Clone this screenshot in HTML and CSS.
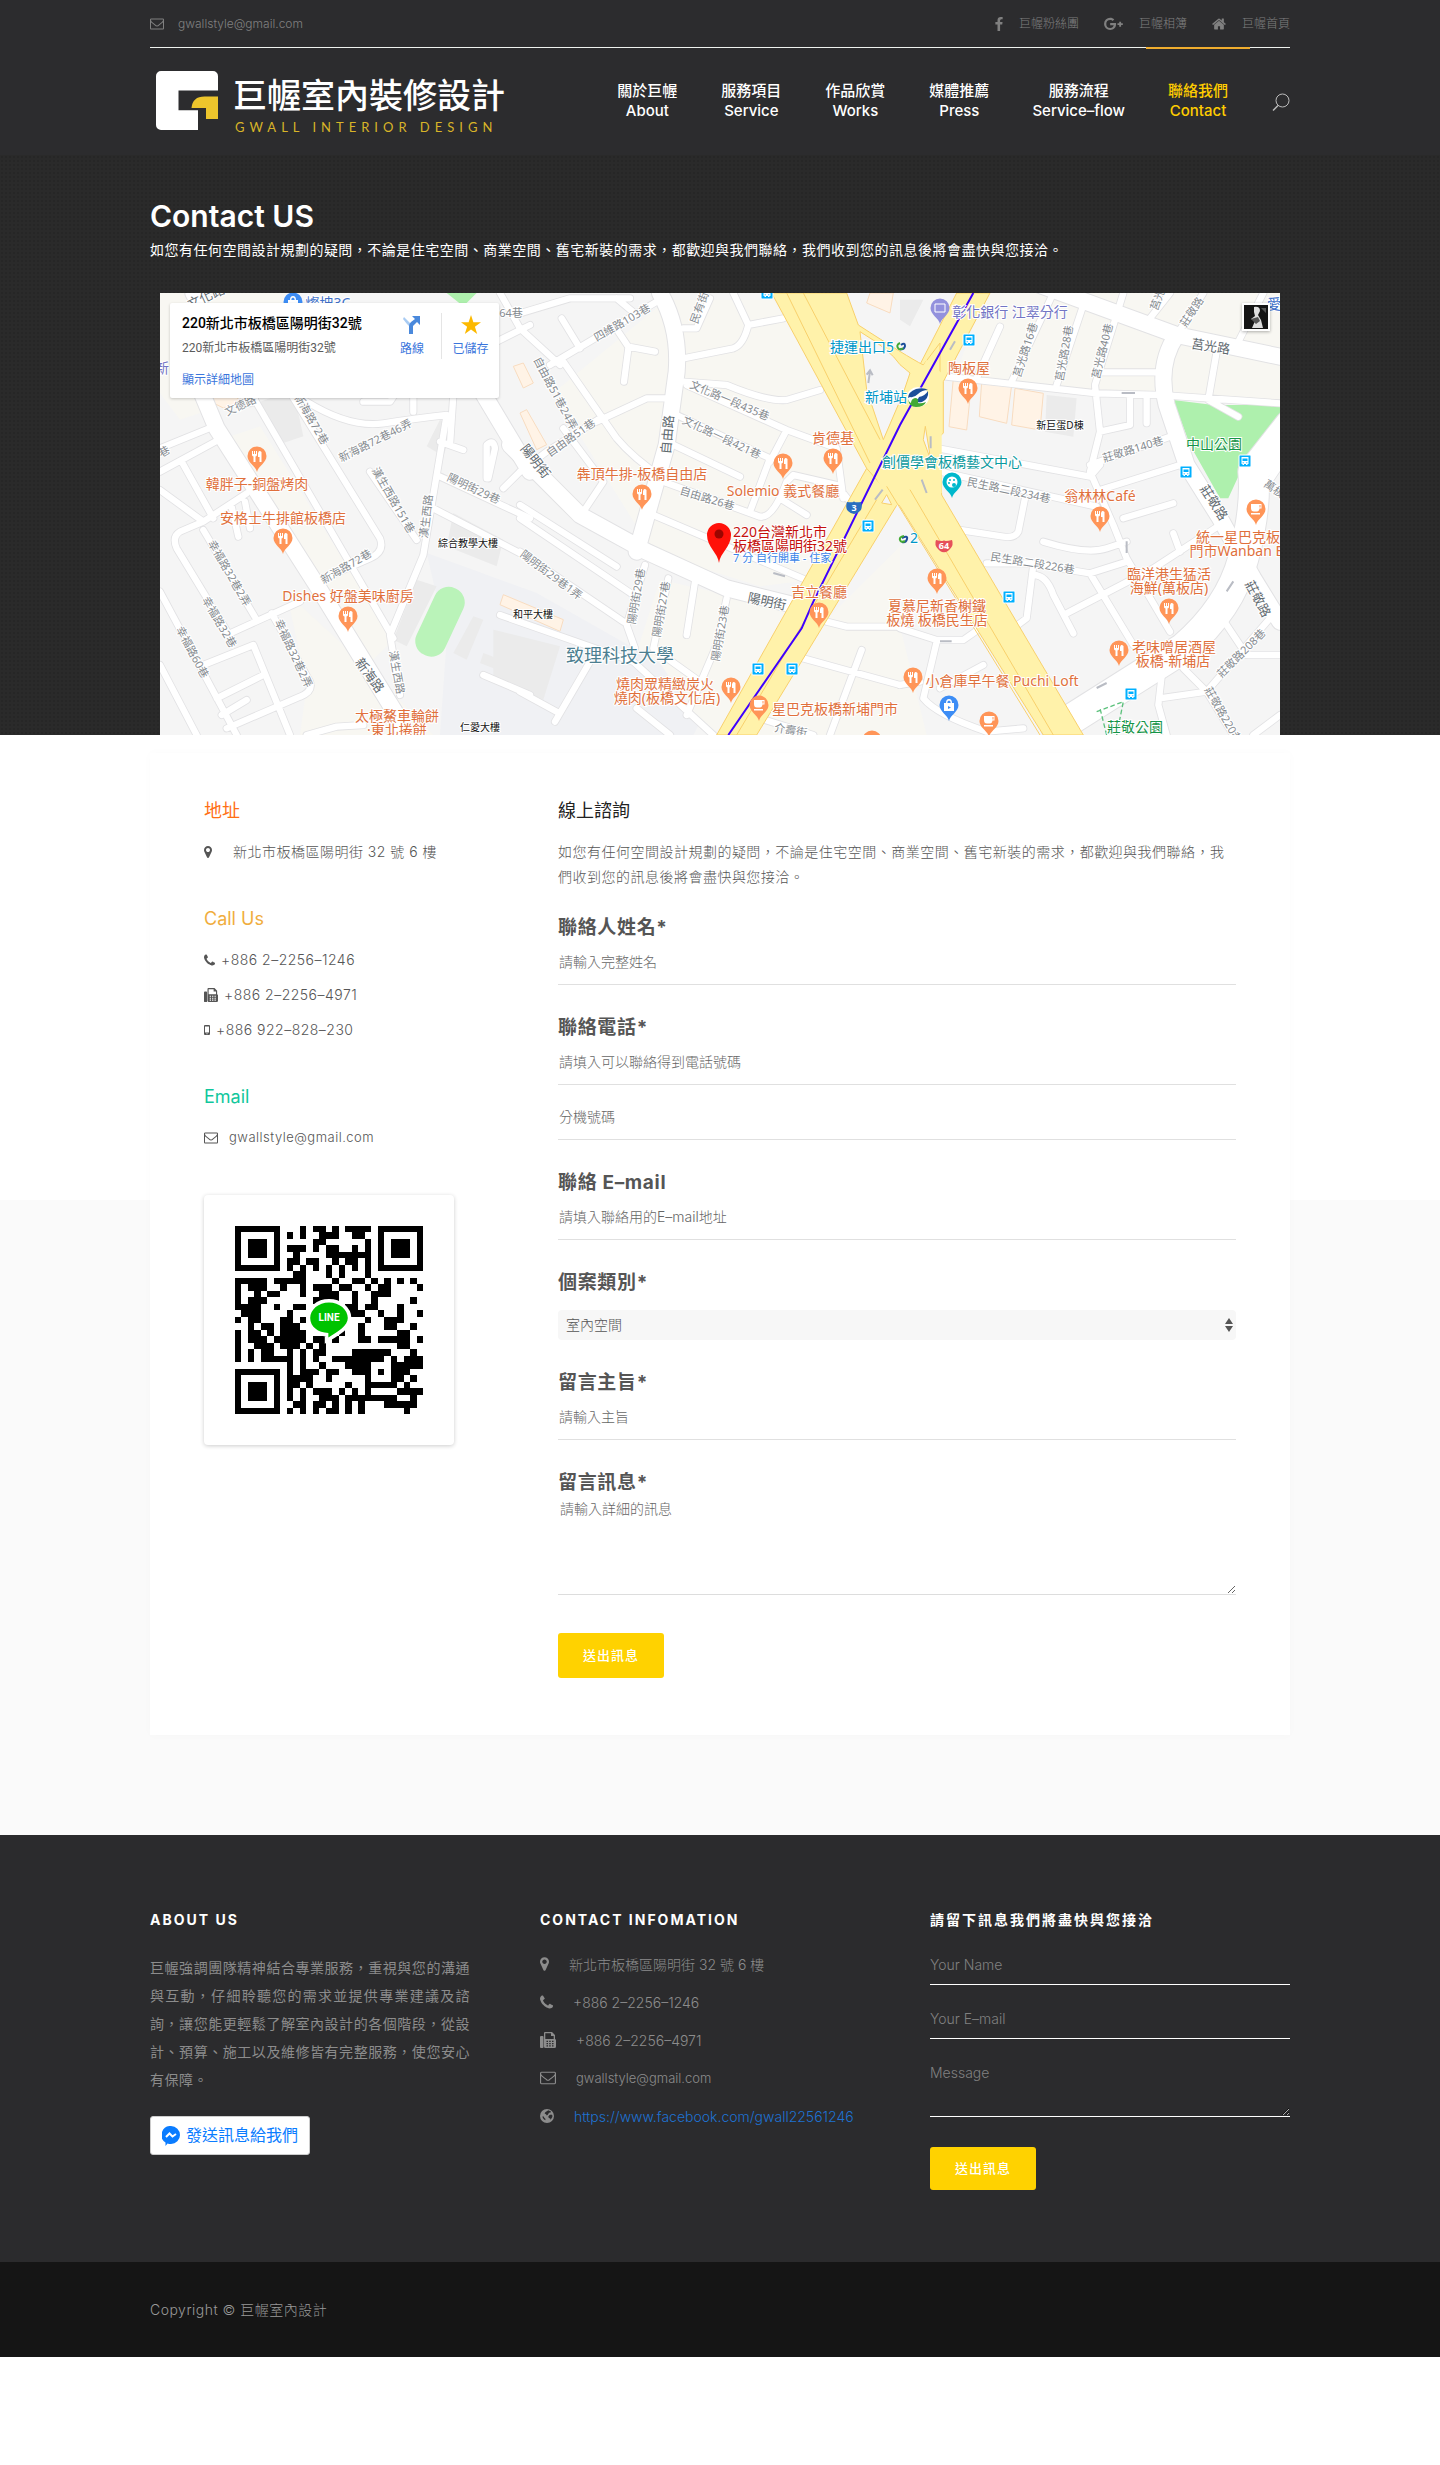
FILE: index.html
```html
<!DOCTYPE html>
<html lang="zh-Hant-TW">
<head>
<meta charset="utf-8">
<meta name="viewport" content="width=device-width, initial-scale=1">
<title>Contact US - 巨幄室內裝修設計</title>
<link rel="stylesheet" href="styles.css">
</head>
<body>
<svg class="defs" aria-hidden="true">
  <symbol id="i-mail" viewBox="0 256 1792 1408"><path d="M1664 1504v-768q-32 36-69 66-268 206-426 338-51 43-83 67t-86.500 48.500-102.500 24.500h-2q-48 0-102.500-24.500t-86.500-48.500-83-67q-158-132-426-338-37-30-69-66v768q0 13 9.500 22.500t22.500 9.500h1472q13 0 22.500-9.500t9.500-22.500zm0-1051v-24.500t-.5-13-3-12.500-5.500-9-9-7.500-14-2.500h-1472q-13 0-22.500 9.500t-9.500 22.500q0 168 147 284 193 152 401 317 6 5 35 29.500t46 37.500 44.500 31.500 50.500 27.500 43 9h2q20 0 43-9t50.500-27.500 44.500-31.500 46-37.500 35-29.500q208-165 401-317 54-43 100.500-115.500t46.500-131.500zm128-37v1088q0 66-47 113t-113 47h-1472q-66 0-113-47t-47-113v-1088q0-66 47-113t113-47h1472q66 0 113 47t47 113z"/></symbol>
  <symbol id="i-marker" viewBox="384 128 1024 1536"><path d="M1152 640q0-106-75-181t-181-75-181 75-75 181 75 181 181 75 181-75 75-181zm256 0q0 109-33 179l-364 774q-16 33-47.500 52t-67.500 19-67.500-19-46.500-52l-365-774q-33-70-33-179 0-212 150-362t362-150 362 150 150 362z"/></symbol>
  <symbol id="i-phone" viewBox="192 128 1408 1408"><path d="M1600 1240q0 27-10 70.500t-21 68.500q-21 50-122 106-94 51-186 51-27 0-53-3.500t-57.500-12.500-47-14.500-55.500-20.500-49-18q-98-35-175-83-127-79-264-216t-216-264q-48-77-83-175-3-9-18-49t-20.500-55.500-14.500-47-12.500-57.500-3.500-53q0-92 51-186 56-101 106-122 25-11 68.500-21t70.500-10q14 0 21 3 18 6 53 76 11 19 30 54t35 63.500 31 53.500q3 4 17.500 25t21.500 35.500 7 28.500q0 20-28.500 50t-62 55-62 53-28.500 46q0 9 5 22.500t8.500 20.500 14 24 11.500 19q76 137 174 235t235 174q2 1 19 11.500t24 14 20.500 8.500 22.500 5q18 0 46-28.500t53-62 55-62 50-28.500q14 0 28.500 7t35.500 21.500 25 17.500q25 15 53.500 31t63.500 35 54 30q70 35 76 53 3 7 3 21z"/></symbol>
  <symbol id="i-fax" viewBox="0 0 16 16"><path fill-rule="evenodd" d="M1 4h1.500a1 1 0 0 1 1 1v10a1 1 0 0 1-1 1H1a1 1 0 0 1-1-1V5a1 1 0 0 1 1-1zM5 0h7l3 3v4a1.500 1.500 0 0 1 1 1.500V14.500A1.500 1.500 0 0 1 14.500 16H5.500A1.500 1.500 0 0 1 4 14.500V1a1 1 0 0 1 1-1zM5.300 1.300V7h8.400V4H11V1.300zM6.500 8.800v1.300H8V8.800zM9.200 8.800v1.300h1.500V8.800zM12 8.800v1.300h1.500V8.800zM6.500 11v1.300H8V11zM9.200 11v1.300h1.500V11zM12 11v1.300h1.500V11zM6.500 13.200v1.300H8v-1.300zM9.200 13.200v1.300h1.500v-1.300zM12 13.200v1.300h1.500v-1.300z"/></symbol>
  <symbol id="i-mobile" viewBox="0 0 6 10"><path fill-rule="evenodd" d="M1 0h4a1 1 0 0 1 1 1v8a1 1 0 0 1-1 1H1a1 1 0 0 1-1-1V1a1 1 0 0 1 1-1zM1 1.600v6h4v-6zM2.500 8.300v.9h1v-.9z"/></symbol>
  <symbol id="i-globe" viewBox="0 0 14 14"><path fill-rule="evenodd" d="M7 0a7 7 0 1 1 0 14A7 7 0 0 1 7 0zM8.300 1.300 6.800 2.200 5.300 3.200 4.600 4.600 6 5.300l.8 1.200 1-.8 1.200-1.900 1.600-.3.400-1zM11.300 5.500 9.500 6 8.300 7.600l.5 1.400 1.400.4.3 1.300 1.600-2.200.5-1.800zM2.500 7.200l.3 1.800 1.300 1.600 1.200.6.200-1.300-1.200-1.200-.6-1.200z"/></symbol>
  <symbol id="i-fb" viewBox="479 0 864 1664"><path d="M1343 12v264h-157q-86 0-116 36t-30 108v189h293l-39 296h-254v759h-306v-759h-255v-296h255v-218q0-186 104-288.500t277-102.500q147 0 228 12z"/></symbol>
  <symbol id="i-gplus" viewBox="0 0 20 13"><path d="M6.500 5.400h6.100q.1.600.1 1.200c0 3.700-2.500 6.300-6.200 6.300a6.450 6.450 0 0 1 0-12.900c1.700 0 3.200.6 4.300 1.700L9 3.400c-.5-.5-1.300-1-2.500-1a4.100 4.100 0 0 0 0 8.200c2.600 0 3.600-1.900 3.700-2.900H6.500zM16 4h2v1.700h1.800v1.900H18v1.800h-2V7.600h-1.800V5.700H16z"/></symbol>
  <symbol id="i-home" viewBox="64 224 1664 1344"><path d="M1472 992v480q0 26-19 45t-45 19h-384v-384h-256v384h-384q-26 0-45-19t-19-45v-480q0-1 .5-3t.5-3l575-474 575 474q1 2 1 6zm223-69l-62 74q-8 9-21 11h-3q-13 0-21-7l-692-577-692 577q-12 8-24 7-13-2-21-11l-62-74q-8-10-7-23.500t11-21.500l719-599q32-26 76-26t76 26l244 204v-195q0-14 9-23t23-9h192q14 0 23 9t9 23v408l219 182q10 8 11 21.500t-7 23.500z"/></symbol>
  <g id="pin"><path d="M0 16C-1 10-9.500 7-9.500 0a9.500 9.500 0 0 1 19 0C9.500 7 1 10 0 16z"/></g>
  <g id="food"><use href="#pin"/><path fill="#fff" d="M-5-5h1v3h1v-3h1v3h1v-3h1v4q0 1-1.500 1.500V6h-2V.5Q-5 0-5-1zM2-5q2 0 2.500 1V6h-2V1H1V-3z"/></g>
  <g id="cup"><use href="#pin"/><path fill="#fff" fill-rule="evenodd" d="M-5-5H5.500v4.500H3.500Q3 2.500 1 2.500H-2Q-5 2.500-5-1zM3.500-4v2.500h1V-4zM-5 4H4v1.500h-9z"/></g>
  <g id="bag"><use href="#pin"/><path fill="#fff" fill-rule="evenodd" d="M-5-2h2q0-4 3-4t3 4h2v8H-5zM-1.700-2h3.400q0-2.500-1.700-2.500T-1.700-2zM-1 1v3l3-1.500z"/></g>
  <g id="bus"><rect x="-6" y="-6" width="12" height="12" rx="1" fill="#00b0ff" stroke="#fff"/><path fill="#fff" fill-rule="evenodd" d="M-3.500-4h7v7h-1v1h-1.500V3h-2v1h-1.500V3h-1zM-2.500-2.500v2.500h5v-2.500zM-2.300 1.200v1h1v-1zM1.300 1.200v1h1v-1z"/></g>
</svg>

<header class="site-header">
  <div class="container">
    <div class="topbar">
      <a class="topbar-link mail" href="mailto:gwallstyle@gmail.com"><svg class="ic w14"><use href="#i-mail"/></svg>gwallstyle@gmail.com</a>
      <nav class="social" aria-label="社群">
        <a class="topbar-link" href="#"><svg class="ic w8"><use href="#i-fb"/></svg>巨幄粉絲團</a>
        <a class="topbar-link" href="#"><svg class="ic w19"><use href="#i-gplus"/></svg>巨幄相簿</a>
        <a class="topbar-link" href="#"><svg class="ic w14"><use href="#i-home"/></svg>巨幄首頁</a>
      </nav>
    </div>
    <div class="mainbar">
      <a class="logo" href="#">
        <svg class="logo-mark" viewBox="0 0 62 59" aria-hidden="true"><path fill="#fff" d="M5 0h52a5 5 0 0 1 5 5v14.500H22.500v19.700H42V59H5a5 5 0 0 1-5-5V5a5 5 0 0 1 5-5z"/><path fill="#edc52c" d="M62 25.500V48H50V37H35.500q1-11.500 13-11.500z"/></svg>
        <span class="logo-text"><span class="logo-zh">巨幄室內裝修設計</span><span class="logo-en">GWALL INTERIOR DESIGN</span></span>
      </a>
      <nav class="menu" aria-label="主選單">
        <a href="#">關於巨幄<br>About</a>
        <a href="#">服務項目<br>Service</a>
        <a href="#">作品欣賞<br>Works</a>
        <a href="#">媒體推薦<br>Press</a>
        <a href="#">服務流程<br>Service–flow</a>
        <a class="active" href="#">聯絡我們<br>Contact</a>
        <button class="search" type="button" aria-label="搜尋"><svg viewBox="0 0 18 18"><g fill="none" stroke="#bbb"><circle cx="10.500" cy="7.500" r="6.500"/><path d="M6 12.500 1 17.500" stroke-width="1.500"/></g></svg></button>
      </nav>
    </div>
  </div>
</header>

<section class="hero">
  <div class="container">
    <h1>Contact US</h1>
    <p>如您有任何空間設計規劃的疑問，不論是住宅空間、商業空間、舊宅新裝的需求，都歡迎與我們聯絡，我們收到您的訊息後將會盡快與您接洽。</p>
    <div class="map">
      <svg class="map-art" viewBox="0 0 1120 442" preserveAspectRatio="xMidYMid slice" role="img" aria-label="地圖">
        <rect width="1120" height="442" fill="#f5f5f5"/>
        <g transform="scale(.33333)">
          <g fill="#f8f7f2">
            <path d="M0 0H420L300 300 60 380 0 300zM180 440 300 400 700 1040 620 1120z"/>
            <path d="M380 900 620 1120 820 1326H420L440 1180z"/>
            <path d="M1180 300 1520 20H1840L2140 540 1960 860 1800 880 1480 780z"/>
            <path d="M1500 860 1940 960 1700 1326 1560 1280 1420 1110z"/>
            <path d="M2000 980 2220 760V1000L2300 1326H1790zM2480 0H3360V330L2800 300 2380 260z"/>
          </g>
          <path fill="#f0f1f4" d="M800 780 1130 900 1500 1110 1620 1290 1600 1326H840L860 1040z"/>
          <g fill="#ebebeb">
            <path d="M290 330 400 290 430 430 370 450zM880 660 1030 740 1010 820 860 760zM840 380 880 400 850 490 800 460zM770 860 830 880 740 1060 700 1040zM940 970 970 980 920 1100 880 1080zM970 1080 1150 1150 1140 1180 960 1110zM1000 1010 1200 1060 1150 1220 1000 1150z"/>
            <path d="M2220 20H2290L2250 100 2220 80zM2660 306 2750 316 2740 431 2655 416z"/>
          </g>
          <g fill="#fff3e6" stroke="#f8dcc0" stroke-width="3">
            <path d="M1060 220 1090 210 1120 270 1090 285zM1080 360 1100 350 1160 455 1130 470zM1030 905 1210 980 1200 1015 1020 935zM2130 0 2200 0 2190 60 2120 30zM140 320 200 290 250 330 190 345z"/>
            <path d="M2465 266 2555 276 2540 391 2458 371zM2565 286 2650 301 2640 411 2555 396zM2380 256 2435 266 2420 411 2367 401z"/>
          </g>
          <path fill="#aef0ad" d="M3040 321 3160 336H3360V396L3260 496 3205 616H3180L3090 456zM860 0 950 0 910 40z"/>
          <rect fill="#baf3b9" x="793" y="876" width="94" height="220" rx="45" transform="rotate(25 840 986)"/>
          <defs>
            <g id="lanes">
              <path transform="translate(-30 -24)" d="M30 490 190 425M30 560 205 465M95 530 190 700M30 615 160 710 290 625M160 710 90 740Q65 755 80 790L250 1070M160 735 320 1005M240 1045 450 950M365 985 480 1190Q490 1220 450 1235L230 1330M30 920 260 1350M160 1140 310 1080 420 1350M200 1240 340 1170M30 1140 140 1350M215 1290 290 1245M245 665 265 755M285 650 300 730M300 320 730 1060M400 290 690 760Q705 800 660 820L500 890M470 350Q600 430 700 415T890 390M910 330 900 480M890 390 820 810 720 1050 750 1230M660 560 800 765M870 470 940 495M860 570 1140 700M850 670 1140 820M1010 580V480Q1030 460 1035 490L1015 580M1060 610 1110 560M640 350H720L740 320M790 380V320M470 1350 560 1325 640 1320M1000 1170 1140 1230M1040 170 1140 120M1050 24 1110 130"/>
              <path transform="translate(1080 -24)" d="M0 85 150 40H330M0 130 120 240M90 240 410 50M125 100 180 190M290 40 350 90M295 140 325 185 405 200M325 190 312 290M130 230 290 460Q340 520 430 580M230 410 380 340H440M240 400 80 500 0 560M130 430 250 590 190 680M640 24 685 120 790 100M685 120Q670 180 640 190L490 220M490 130H530L570 40M490 290 620 300Q740 350 800 345L900 315M500 300 800 435 950 490 970 640M470 390 750 520 690 680M800 435 750 530M440 470 660 575M430 590 720 695Q760 700 800 590L820 570 950 600 990 650M780 640 860 690M400 690 870 890M0 660 290 845M0 700 340 930M0 800 310 1010M375 840 320 1020 345 1090M445 880 400 1090 540 1190M525 890 500 1050M620 940 590 1080 500 1290M920 1010 980 1025H1140M850 1120 1140 1200M1025 1095 930 1350M-60 990 340 1130 580 1350M210 1130 105 1310M0 1220 110 1280M350 1270 450 1350M720 1300 880 1350"/>
              <path transform="translate(2220 -24)" d="M140 275 590 325 780 330 1140 355M300 125 230 280M460 24 335 290M550 60 470 300M670 24 585 300 600 440 570 560 640 720 680 820 810 1040M600 262H770M690 330V420L600 440M740 330V415M950 200 925 345 1015 395M115 490 570 575 600 540M600 615 840 540M570 540 810 455M120 560 590 665M375 640 355 740Q345 760 310 755L180 735M670 700 820 655M430 770Q560 810 620 790L680 770M260 835H390L570 865 680 830M570 865 700 1080M500 985 760 850 960 720M820 745 840 800M400 840 380 1000 340 1030M400 870Q440 870 460 930L520 1045M0 1030 110 1065H190L240 1030M110 1070 70 1240Q110 1290 260 1340L370 1330M120 1210 250 1140M960 990 1040 1110H1140M1110 1000 920 1220 780 1240M850 1150 920 1220 1000 1350M790 1130 775 1260 800 1350M1010 180 1090 24M750 100 810 24M830 150 910 24M1100 600 1140 540M0 1200 60 1190M1060 1350 1140 1290"/>
            </g>
            <g id="streets">
              <path transform="translate(-30 -24)" d="M120 240 200 430 500 900 740 1290 770 1370M130 24 300 340M960 260 1140 560"/>
              <path transform="translate(1080 -24)" d="M-30 480 180 690 380 800 620 910 860 970M420 24Q480 130 470 260L440 480 350 800"/>
              <path transform="translate(2220 -24)" d="M420 0 830 150 1140 215M830 150Q770 240 800 360L860 540 960 700 1060 880 1140 1010"/>
            </g>
            <path id="avenue" transform="translate(2220 -24)" d="M470 1330 850 1090Q990 970 1030 820T1060 560L1170 420"/>
          </defs>
          <g fill="none" stroke-linejoin="round" stroke-linecap="round">
            <use href="#lanes" stroke="#e2e2e4" stroke-width="24"/>
            <use href="#streets" stroke="#e2e2e4" stroke-width="54"/>
            <use href="#avenue" stroke="#e2e2e4" stroke-width="96"/>
            <use href="#lanes" stroke="#fff" stroke-width="19"/>
            <use href="#streets" stroke="#fff" stroke-width="48"/>
            <use href="#avenue" stroke="#fff" stroke-width="90"/>
          </g>
          <g fill="#fff2aa" stroke="#f8d06b" stroke-width="3">
            <path d="M1670 1326 2120 526 2390 0H2490L2350 266V420L2330 440 1790 1326z"/>
            <path d="M1835 0H2060L2095 96Q2240 190 2290 216L2340 150V440L2345 606 2770 1326H2650L2220 640 2120 526z"/>
          </g>
          <path fill="#fff2aa" d="M2125 520 2300 200 2345 240V600L2200 640z"/>
          <path d="M2100 116Q2190 170 2220 215L2250 240 2230 300 2170 440 2120 290zM2165 630 2180 605 2195 635zM2290 440 2296 400 2312 500z" fill="#f5f5f5" stroke="#f8d06b" stroke-width="3"/>
          <path d="M1930 0 2160 440M1880 0 2130 510M2180 580 2640 1326M2250 590 2680 1326M1730 1326 2150 620" fill="none" stroke="#f8d06b" stroke-width="3"/>
          <path d="M1705 1326 1925 1006 1960 926 2220 396 2440 0" fill="none" stroke="#3f00ff" stroke-width="6"/>
          <path d="M2125 270 2130 235M2120 245 2130 232 2138 247M1840 840 1875 850M2145 620 2168 590M2370 170 2385 145M2312 466V430M2885 300H2925M2900 745V780M3200 895 3220 865M2840 1170 2810 1185M2300 600 2285 560M2340 1045H2375" stroke="#b9bcc4" stroke-width="6" fill="none"/>
          <path d="M2810 1256 2890 1226 2870 1326M2840 1326 2820 1246" fill="none" stroke="#5cc17c" stroke-width="4" stroke-dasharray="14 8"/>
        </g>

        <g class="st">
          <text transform="translate(217 151) rotate(-27)">新海路72巷46弄</text><text transform="translate(148 128) rotate(60)">新海路72巷</text><text transform="translate(82 116) rotate(-25)">文德路</text><text transform="translate(230 209) rotate(60)">漢生西路151巷</text><text transform="translate(270 224) rotate(-83)">漢生西路</text><text transform="translate(312 199) rotate(25)">陽明街29巷</text><text transform="translate(188 277) rotate(-30)">新海路72巷</text><text transform="translate(66 282) rotate(60)">幸福路32巷2弄</text><text transform="translate(56 331) rotate(60)">幸福路32巷</text><text transform="translate(29 361) rotate(62)">幸福路60巷</text><text transform="translate(130 362) rotate(65)">幸福路32巷2弄</text><text transform="translate(233 380) rotate(80)">漢生西路</text><text x="351" y="24">64巷</text><text transform="translate(6 162) rotate(-30)">巷</text><text transform="translate(366 268) rotate(40)">陽</text>
          <text transform="translate(464 33) rotate(-30)">四維路103巷</text><text transform="translate(543 16) rotate(-70)">民有街</text><text transform="translate(392 102) rotate(62)">自由路51巷24弄</text><text transform="translate(413 148) rotate(-35)">自由路51巷</text><text transform="translate(568 111) rotate(23)">文化路一段435巷</text><text transform="translate(560 148) rotate(25)">文化路一段421巷</text><text transform="translate(546 209) rotate(17)">自由路26巷</text><text transform="translate(389 285) rotate(37)">陽明街29巷1弄</text><text transform="translate(480 304) rotate(-80)">陽明街29巷</text><text transform="translate(505 317) rotate(-80)">陽明街27巷</text><text transform="translate(564 341) rotate(-80)">陽明街23巷</text><text transform="translate(630 441) rotate(10)">介壽街</text>
          <text transform="translate(869 58) rotate(-72)">莒光路16巷</text><text transform="translate(908 61) rotate(-80)">莒光路28巷</text><text transform="translate(946 59) rotate(-76)">莒光路40巷</text><text transform="translate(1035 21) rotate(-57)">莊敬路</text><text transform="translate(1001 8) rotate(-70)">莒光</text><text transform="translate(974 160) rotate(-17)">莊敬路140巷</text><text transform="translate(848 201) rotate(12)">民生路二段234巷</text><text transform="translate(872 274) rotate(9)">民生路二段226巷</text><text transform="translate(1112 199) rotate(35)">萬板</text><text transform="translate(1084 363) rotate(-45)">莊敬路208巷</text><text transform="translate(1060 424) rotate(60)">莊敬路220巷</text>
        </g>
        <g class="st main">
          <text transform="translate(48 8) rotate(-25)">文化路</text><text transform="translate(206 385) rotate(54)">新海路</text><text transform="translate(512 142) rotate(-85)">自由路</text><text transform="translate(372 171) rotate(52)">陽明街</text><text transform="translate(606 313) rotate(12)">陽明街</text><text transform="translate(1050 58) rotate(9)">莒光路</text><text transform="translate(1050 212) rotate(57)">莊敬路</text><text transform="translate(1094 308) rotate(62)">莊敬路</text>
        </g>
        <g class="poi">
          <text x="97" y="196">韓胖子-銅盤烤肉</text><text x="123" y="230">安格士牛排館板橋店</text><text x="188" y="308">Dishes 好盤美味廚房</text><text x="237" y="428">太極鰲車輪餅</text><text x="237" y="442">·東北捲餅</text><text x="482" y="186">犇頂牛排-板橋自由店</text><text x="623" y="203">Solemio 義式餐廳</text><text x="673" y="150">肯德基</text><text x="659" y="304">吉立餐廳</text><text x="505" y="396">燒肉眾精緻炭火</text><text x="507" y="410">燒肉(板橋文化店)</text><text x="675" y="421">星巴克板橋新埔門市</text><text x="777" y="318">夏慕尼新香榭鐵</text><text x="777" y="332">板燒 板橋民生店</text><text x="809" y="80">陶板屋</text><text x="940" y="208">翁林林Café</text><text x="1085" y="249">統一星巴克板橋</text><text x="1081" y="263">門市Wanban B1</text><text x="1009" y="286">臨洋港生猛活</text><text x="1009" y="300">海鮮(萬板店)</text><text x="1014" y="359">老味噌居酒屋</text><text x="1013" y="373">板橋-新埔店</text><text x="842" y="393">小倉庫早午餐 Puchi Loft</text>
          <g class="c-red"><text x="573" y="244">220台灣新北市</text><text x="573" y="258">板橋區陽明街32號</text></g>
          <text class="c-route" x="573" y="269">7 分 自行開車 - 住家</text>
          <g class="c-metro"><text x="702" y="59">捷運出口5</text><text x="726" y="109">新埔站</text><text x="754" y="250">2</text></g>
          <text class="c-teal" x="792" y="174">創價學會板橋藝文中心</text>
          <g class="c-bank"><text x="850" y="24">彰化銀行 江翠分行</text><text x="2" y="80">新</text></g>
          <g class="c-green"><text x="1054" y="156">中山公園</text><text x="975" y="439">莊敬公園</text></g>
          <g class="c-shop"><text x="168" y="15">燦坤3C</text><text x="1114" y="16">愛</text></g>
          <text class="c-school" x="460" y="369">致理科技大學</text>
          <g class="c-bld"><text x="308" y="254">綜合教學大樓</text><text x="373" y="325">和平大樓</text><text x="320" y="438">仁愛大樓</text><text x="900" y="136">新巨蛋D棟</text></g>
        </g>
        <g fill="#ff9558">
          <use href="#food" transform="translate(97 163)"/><use href="#food" transform="translate(123 245)"/><use href="#food" transform="translate(188 323)"/><use href="#food" transform="translate(482 201)"/><use href="#food" transform="translate(623 170)"/><use href="#food" transform="translate(673 165)"/><use href="#food" transform="translate(659 319)"/><use href="#food" transform="translate(571 394)"/><use href="#food" transform="translate(808 95)"/><use href="#food" transform="translate(940 223)"/><use href="#food" transform="translate(1009 315)"/><use href="#food" transform="translate(959 357)"/><use href="#food" transform="translate(777 285)"/><use href="#food" transform="translate(753 384)"/>
          <use href="#cup" transform="translate(599 412)"/><use href="#cup" transform="translate(712 447)"/><use href="#cup" transform="translate(1096 216)"/><use href="#cup" transform="translate(829 428)"/>
        </g>
        <g fill="#3d8df5"><use href="#bag" transform="translate(789 412)"/><use href="#bag" transform="translate(133 9)"/></g>
        <g fill="#9391dd" transform="translate(780 15)"><use href="#pin"/><path d="M-5-4H5V4H-5z" fill="none" stroke="#fff"/></g>
        <g fill="#00b8cc" transform="translate(792 189)"><use href="#pin"/><circle r="5.500" fill="#fff"/><circle cx="-2" cy="-2" r="1"/><circle cx="2" cy="-2" r="1"/><circle cx="-3" cy="1" r="1"/><circle cx="2" cy="3" r="2"/></g>
        <use href="#bus" transform="translate(607 0)"/><use href="#bus" transform="translate(598 376)"/><use href="#bus" transform="translate(632 376)"/><use href="#bus" transform="translate(708 233)"/><use href="#bus" transform="translate(809 47)"/><use href="#bus" transform="translate(1026 179)"/><use href="#bus" transform="translate(1085 168)"/><use href="#bus" transform="translate(849 304)"/><use href="#bus" transform="translate(971 401)"/>
        <g><ellipse cx="758" cy="104" rx="11" ry="10" fill="#fff"/><path d="M748 105q0-6 8-9 8-2 12 1-6 0-10 4t-8 3zM759 104q6-1 9-6 1 8-6 11-5 1-9-1 5-1 6-4z" fill="#1c4e9a"/><path d="M748 106q1 8 8 8 8 0 10-5-5 2-8 1 1-5-3-5-4 1-4 5-2-1-3-4z" fill="#43a935"/></g>
        <g fill="none" stroke-width="2"><path stroke="#1c4e9a" d="M741 52q4-3 4 1-1 4-5 3M742 245q6-3 5 1-1 4-5 3"/><path stroke="#43a935" d="M740 50q-4 2-2 5t5 0M744 243q-5 1-4 4t5 1"/></g>
        <path d="M687 209q7 1 7-1 0 2 7 1 2 6-1 9t-6 3q-3 0-6-3t-1-9z" fill="#2a6fc0"/><text class="shield" x="694" y="218">3</text>
        <path d="M776 247q8 2 8 0 0 2 8 0 2 5-2 9t-6 3q-2 1-6-3t-2-9z" fill="#e6505a"/><text class="shield" x="784" y="256">64</text>
        <path d="M559 270c-1-10-12-16-12-28a12 12 0 0 1 24 0c0 12-11 18-12 28z" fill="#ff1109"/><circle cx="559" cy="241" r="4.500" fill="#9c0500"/>
      </svg>
      <div class="place">
        <div class="place-text">
          <strong>220新北市板橋區陽明街32號</strong>
          <span>220新北市板橋區陽明街32號</span>
          <a href="#">顯示詳細地圖</a>
        </div>
        <a class="place-act" href="#"><svg viewBox="0 0 20 20"><path fill="#a9ccf3" d="M2 2 9 9v4L5 9 1 4z"/><path fill="#4a89dc" d="M18 1v9l-3-3-4 4v8H7v-8q0-2 2-4l4-3-3-3z"/></svg>路線</a>
        <a class="place-act" href="#"><svg viewBox="0 0 20 20"><path fill="#fcb900" d="m10 0 2.400 7.200H20l-6.100 4.500L16.200 19 10 14.500 3.800 19l2.300-7.300L0 7.200h7.600z"/></svg>已儲存</a>
      </div>
      <svg class="avatar" viewBox="0 0 24 24" role="img" aria-label="使用者"><path fill="#151515" d="M0 0h24v24H0z"/><path fill="#ddd" d="M10 2q6-1 6 4l-2 4 3 5 2 8H8l3-7-4-2 4-3-1-4z"/><path fill="#555" d="m7 14 7-2 2 4-4 3zM17 3h5v5z"/></svg>
    </div>
  </div>
</section>

<main class="content">
  <div class="container card">
    <aside class="info">
      <section>
        <h2 class="t-orange">地址</h2>
        <p class="wide"><svg class="ic w8"><use href="#i-marker"/></svg>新北市板橋區陽明街 32 號 6 樓</p>
      </section>
      <section>
        <h2 class="t-amber">Call Us</h2>
        <p><svg class="ic w11"><use href="#i-phone"/></svg>+886 2–2256–1246</p>
        <p><svg class="ic w14"><use href="#i-fax"/></svg>+886 2–2256–4971</p>
        <p><svg class="ic w6"><use href="#i-mobile"/></svg>+886 922–828–230</p>
      </section>
      <section>
        <h2 class="t-teal">Email</h2>
        <p class="mid"><svg class="ic w14"><use href="#i-mail"/></svg><span class="email">gwallstyle@gmail.com</span></p>
      </section>
      <div class="qr">
        <svg viewBox="0 0 29 29" role="img" aria-label="LINE QR Code">
          <g fill="none" stroke="#000" shape-rendering="crispEdges">
            <path d="M.5.500h6v6h-6zM22.500.500h6v6h-6zM.5 22.500h6v6h-6z"/>
            <path stroke-width="3" d="M2 3.500h3M24 3.500h3M2 25.500h3"/>
            <path d="M10 .5h1M12 .5h2M15 .5h1M17 .5h4M8 1.500h1M10 1.500h1M13 1.500h3M18 1.500h2M12 2.500h2M20 2.500h1M8 3.500h3M12 3.500h1M14 3.500h2M18 3.500h1M20 3.500h1M9 4.500h1M14 4.500h7M8 5.500h2M11 5.500h2M15 5.500h1M17 5.500h2M20 5.500h1M8 6.500h1M10 6.500h1M12 6.500h1M14 6.500h1M16 6.500h1M18 6.500h1M20 6.500h1M9 7.500h2M14 7.500h1M16 7.500h1M20 7.500h1M0 8.500h5M6 8.500h5M15 8.500h1M18 8.500h2M21 8.500h1M23 8.500h1M25 8.500h1M27 8.500h1"/>
            <path d="M0 9.500h1M2 9.500h3M7 9.500h1M10 9.500h1M12 9.500h3M16 9.500h2M20 9.500h1M22 9.500h2M28 9.500h1M0 10.500h1M3 10.500h1M5 10.500h2M10 10.500h1M13 10.500h3M18 10.500h1M21 10.500h3M0 11.500h1M2 11.500h3M12 11.500h4M18 11.500h1M21 11.500h1M27 11.500h1M0 12.500h4M6 12.500h1M9 12.500h2M17 12.500h2M20 12.500h2M25 12.500h1M1 13.500h3M8 13.500h1M17 13.500h3M22 13.500h1M25 13.500h1M28 13.500h1M0 14.500h1M2 14.500h2M7 14.500h2M10 14.500h1M20 14.500h1M23 14.500h3M2 15.500h1M4 15.500h2M7 15.500h3M19 15.500h1M23 15.500h2M27 15.500h1M0 16.500h1M2 16.500h2M5 16.500h1M7 16.500h4M16 16.500h1M19 16.500h1M25 16.500h2"/>
            <path d="M0 17.500h1M2 17.500h3M6 17.500h5M12 17.500h2M15 17.500h1M19 17.500h2M22 17.500h5M28 17.500h1M0 18.500h1M3 18.500h3M7 18.500h3M11 18.500h1M13 18.500h1M25 18.500h2M0 19.500h1M2 19.500h1M4 19.500h2M8 19.500h1M10 19.500h1M12 19.500h2M18 19.500h6M27 19.500h1M0 20.500h1M2 20.500h1M4 20.500h5M10 20.500h1M12 20.500h1M15 20.500h8M24 20.500h1M26 20.500h3M8 21.500h1M10 21.500h1M13 21.500h1M17 21.500h4M24 21.500h5M8 22.500h1M10 22.500h3M14 22.500h2M18 22.500h3M22 22.500h1M24 22.500h3M8 23.500h4M14 23.500h1M20 23.500h1M24 23.500h2M27 23.500h1"/>
            <path d="M8 24.500h2M11 24.500h1M17 24.500h1M20 24.500h5M26 24.500h1M8 25.500h1M10 25.500h1M12 25.500h3M16 25.500h1M18 25.500h1M20 25.500h1M25 25.500h4M8 26.500h1M10 26.500h1M13 26.500h3M17 26.500h4M21 26.500h4M27 26.500h1M9 27.500h1M10 27.500h1M12 27.500h2M15 27.500h1M17 27.500h1M19 27.500h1M23 27.500h5M8 28.500h1M10 28.500h1M12 28.500h1M14 28.500h2M17 28.500h1M19 28.500h1M26 28.500h1"/>
          </g>
          <path fill="#00c300" stroke="#fff" stroke-width="1.100" paint-order="stroke" d="M14.500 11.800c1.600 0 2.900 1.100 2.900 2.400 0 1.200-1.500 2.100-3 3v-.7c-1.600 0-2.800-1-2.800-2.300s1.300-2.400 2.900-2.400z"/>
        </svg>
        <span class="line-mark">LINE</span>
      </div>
    </aside>

    <form class="inquiry">
      <h2>線上諮詢</h2>
      <p class="lead">如您有任何空間設計規劃的疑問，不論是住宅空間、商業空間、舊宅新裝的需求，都歡迎與我們聯絡，我們收到您的訊息後將會盡快與您接洽。</p>
      <div class="field"><label for="f-name">聯絡人姓名*</label><input id="f-name" type="text" placeholder="請輸入完整姓名"></div>
      <div class="field"><label for="f-tel">聯絡電話*</label><input id="f-tel" type="tel" placeholder="請填入可以聯絡得到電話號碼"><input type="text" aria-label="分機號碼" placeholder="分機號碼"></div>
      <div class="field"><label for="f-mail">聯絡 E–mail</label><input id="f-mail" type="email" placeholder="請填入聯絡用的E–mail地址"></div>
      <div class="field"><label for="f-type">個案類別*</label><div class="select"><select id="f-type"><option>室內空間</option></select><svg viewBox="0 0 8 14"><path d="M4 0 8 6H0zM4 14 0 8h8z" fill="#555"/></svg></div></div>
      <div class="field"><label for="f-sub">留言主旨*</label><input id="f-sub" type="text" placeholder="請輸入主旨"></div>
      <div class="field"><label for="f-msg">留言訊息*</label><textarea id="f-msg" placeholder="請輸入詳細的訊息"></textarea></div>
      <button class="btn" type="submit">送出訊息</button>
    </form>
  </div>
</main>

<footer class="site-footer">
  <div class="container cols">
    <section class="about">
      <h3>ABOUT US</h3>
      <p>巨幄強調團隊精神結合專業服務，重視與您的溝通與互動，仔細聆聽您的需求並提供專業建議及諮詢，讓您能更輕鬆了解室內設計的各個階段，從設計、預算、施工以及維修皆有完整服務，使您安心有保障。</p>
      <button class="messenger" type="button"><svg viewBox="0 0 18 20"><path fill="#0a7cff" d="M9 0a9 9 0 0 1 0 18q-2 0-3.500-.6L3.500 20v-3.500A9 9 0 0 1 9 0z"/><path fill="none" stroke="#fff" stroke-width="2" d="m4 11 3.500-3.500 3 3L14 8"/></svg>發送訊息給我們</button>
    </section>
    <section>
      <h3>CONTACT INFOMATION</h3>
      <ul>
        <li><svg class="ic w9"><use href="#i-marker"/></svg>新北市板橋區陽明街 32 號 6 樓</li>
        <li><svg class="ic w13"><use href="#i-phone"/></svg>+886 2–2256–1246</li>
        <li><svg class="ic w16"><use href="#i-fax"/></svg>+886 2–2256–4971</li>
        <li><svg class="ic w16"><use href="#i-mail"/></svg><span class="email">gwallstyle@gmail.com</span></li>
        <li><svg class="ic w14"><use href="#i-globe"/></svg><a href="#">https://www.facebook.com/gwall22561246</a></li>
      </ul>
    </section>
    <form class="quick">
      <h3>請留下訊息我們將盡快與您接洽</h3>
      <input type="text" aria-label="Your Name" placeholder="Your Name">
      <input type="email" aria-label="Your E-mail" placeholder="Your E–mail">
      <textarea aria-label="Message" placeholder="Message"></textarea>
      <button class="btn" type="submit">送出訊息</button>
    </form>
  </div>
</footer>
<div class="copyright"><div class="container">Copyright © 巨幄室內設計</div></div>
</body>
</html>
```
FILE: styles.css
```css
* { box-sizing: border-box; margin: 0; }
:root { --tracking: 0.035em; }
body { background: #fff; color: #555; font: 300 14px/25px Inter, "Noto Sans CJK TC", sans-serif; }
a { color: inherit; text-decoration: none; }
button, input, select, textarea { font: inherit; color: inherit; border: 0; border-radius: 0; background: none; outline: 0; }
.defs { position: absolute; width: 0; height: 0; }
.container { width: 100%; max-width: 1140px; margin: 0 auto; }

.ic { fill: currentColor; flex: none; height: 14px; }
.w6 { width: 6px; height: 10px; }
.w8 { width: 8px; }
.w9 { width: 9px; }
.w11 { width: 11px; }
.w13 { width: 13px; }
.w14 { width: 14px; }
.w16 { width: 16px; height: 16px; }
.w19 { width: 19px; }
.email { font-size: 13px; }

.site-header { background: #2c2c2e; }
.topbar { display: flex; justify-content: space-between; height: 48px; border-bottom: 1px solid #eef2ee; color: #808080; }
.topbar-link { display: flex; align-items: center; gap: 16px; font-size: 12px; }
.topbar-link.mail { gap: 14px; }
.social { display: flex; gap: 25px; }
.mainbar { display: flex; justify-content: space-between; height: 107px; }
.logo { display: flex; align-items: flex-start; gap: 15px; padding: 23px 6px 0; }
.logo-mark { width: 62px; height: 59px; }
.logo-text { display: flex; flex-direction: column; }
.logo-zh { font-weight: 500; font-size: 34px; line-height: 49px; color: #fff; }
.logo-en { margin-left: 2px; font: 400 13px/14px Lato, sans-serif; letter-spacing: 5px; color: #d8b428; }
.menu { display: flex; }
.menu a { min-width: 104px; border-top: 2px solid transparent; margin-top: -1px; padding: 32px 21px 0; color: #fff; font-weight: 500; font-size: 15px; line-height: 20px; text-align: center; }
.menu a.active { border-color: #f0ad2e; color: #ffcc00; }
.search { width: 40px; padding: 0; display: flex; align-items: center; justify-content: flex-end; }
.search svg { width: 18px; height: 18px; }

.hero { background: radial-gradient(#262626 1px, #2a2a2a 1px) 0 0 / 4px 4px; color: #fff; padding-top: 38px; }
.hero h1 { font-weight: 600; font-size: 30px; line-height: 46px; }
.hero p { font-weight: 400; line-height: 22px; letter-spacing: var(--tracking); }
.map { position: relative; margin: 32px 10px 0; height: 442px; overflow: hidden; }
.map-art { display: block; width: 100%; height: 100%; font-family: "Noto Sans", "Noto Sans CJK TC", sans-serif; font-weight: 400; text-anchor: middle; }
.st { fill: #868b90; font-size: 11px; }
.st text, .poi text { paint-order: stroke; stroke: #fff; stroke-width: 2px; }
.st.main { fill: #5f6a70; font-size: 13px; }
.poi { fill: #e0703c; font-size: 14px; }
.c-red, .c-route { text-anchor: start; fill: #c5100c; }
.c-route { fill: #3c86e8; font-size: 11px; }
.c-metro { fill: #0096c8; }
.c-teal { fill: #0a9a9e; }
.c-bank { fill: #7275c4; }
.c-green { fill: #159447; }
.c-shop { fill: #4070c8; }
.c-school { fill: #4d7f91; font-size: 18px; }
.c-bld { fill: #111; font-size: 10px; }
.shield { fill: #fff; font-size: 9px; font-weight: 700; }
.place { position: absolute; left: 10px; top: 10px; width: 329px; height: 95px; padding: 10px 0 10px 12px; display: flex; background: #fff; border-radius: 2px; box-shadow: 0 1px 3px rgba(0,0,0,.2); font: 400 12px/18px Roboto, "Noto Sans CJK TC", sans-serif; color: #5b5b5b; }
.place-text { flex: 1; display: flex; flex-direction: column; }
.place-text strong { font-weight: 500; font-size: 14px; line-height: 20px; color: #000; margin-bottom: 6px; }
.place-text a { color: #3a75dc; margin-top: 14px; }
.place-act { width: 58px; height: 46px; display: flex; flex-direction: column; align-items: center; gap: 5px; color: #3a75dc; }
.place-act + .place-act { border-left: 1px solid #e5e5e5; }
.place-act svg { width: 20px; height: 20px; flex: none; margin-top: 2px; }
.avatar { position: absolute; top: 10px; right: 10px; width: 28px; height: 28px; border: 2px solid #fff; box-shadow: 0 1px 3px rgba(0,0,0,.3); }

.content { background: linear-gradient(#fff 465px, #fafafa 465px); padding: 18px 0 100px; }
.card { display: flex; gap: 104px; padding: 45px 54px 57px; background: #fff; box-shadow: 0 0 10px rgba(0,0,0,.02); }
.card h2 { font-weight: 400; font-size: 18px; line-height: 26px; letter-spacing: 0; margin-bottom: 15px; color: #222; }
.info { width: 250px; flex: none; letter-spacing: var(--tracking); }
.info section { margin-bottom: 42px; }
.info p { display: flex; align-items: center; gap: 6px; margin-bottom: 10px; }
.info p:last-child { margin-bottom: 0; }
.info p.mid { gap: 11px; }
.info p.wide { gap: 21px; }
.card .t-orange { color: #ff6f14; }
.card .t-amber { color: #f0ad3e; }
.card .t-teal { color: #10c79c; }
.qr { position: relative; margin-top: 45px; padding: 31px; background: #fff; border-radius: 4px; box-shadow: 0 1px 4px rgba(0,0,0,.2); }
.qr svg { display: block; width: 100%; }
.line-mark { position: absolute; left: 0; right: 0; top: 50%; margin-top: -10px; text-align: center; font: 700 10px/16px Roboto, sans-serif; color: #fff; letter-spacing: 0; }

.inquiry { flex: 1; }
.lead { letter-spacing: var(--tracking); margin-bottom: 23px; }
.field { margin-bottom: 27px; }
.field label { display: block; font-weight: 700; font-size: 19px; line-height: 32px; letter-spacing: var(--tracking); }
.field input { display: block; width: 100%; height: 41px; padding: 0 1px 6px; border-bottom: 1px solid #e0e0e0; }
.field input + input { margin-top: 14px; }
.field textarea { display: block; width: 100%; height: 96px; padding: 0 2px; line-height: 20px; border-bottom: 1px solid #ddd; }
::placeholder { color: #666; opacity: 1; }
.select { position: relative; margin-top: 11px; }
.select select { appearance: none; display: block; width: 100%; height: 30px; padding: 0 8px 2px; background: #f7f7f7; border-radius: 4px; }
.select svg { position: absolute; right: 3px; top: 8px; width: 8px; height: 14px; }
.btn { display: block; width: 106px; height: 45px; background: #ffd200; border-radius: 3px; color: #fff; font-weight: 500; font-size: 13px; letter-spacing: 1px; padding: 0; }
.inquiry .btn { margin-top: 38px; }

.site-footer { background: #2b2b2d; color: #8c8c8c; padding: 72px 0; }
.cols { display: grid; grid-template-columns: 320px 320px 1fr; column-gap: 70px; }
.site-footer h3 { color: #fff; font-weight: 700; font-size: 14px; line-height: 26px; letter-spacing: 2px; margin-bottom: 18px; white-space: nowrap; }
.about p { margin-top: 21px; font-weight: 400; line-height: 28px; text-align: justify; letter-spacing: var(--tracking); }
.messenger { display: flex; align-items: center; gap: 6px; margin-top: 22px; height: 39px; padding: 0 11px; background: #fff; border: 1px solid #ccc; border-radius: 3px; color: #0a7cff; font-weight: 400; font-size: 16px; }
.messenger svg { width: 18px; height: 20px; }
.site-footer ul { list-style: none; padding: 0; display: flex; flex-direction: column; gap: 12px; }
.site-footer li { display: flex; align-items: center; gap: 20px; height: 26px; }
.site-footer li a { color: #1e72d2; }
.quick input { display: block; width: 100%; height: 38px; padding: 0 0 2px; border-bottom: 1px solid #fff; margin-bottom: 16px; }
.site-footer .quick h3 { margin-bottom: 14px; }
.quick textarea { display: block; width: 100%; height: 62px; padding: 8px 0; line-height: 20px; border-bottom: 1px solid #fff; margin-bottom: 30px; }
.quick .btn { height: 43px; }
.quick ::placeholder { color: #808080; }
.copyright { background: #151515; color: #999; padding: 35px 0; letter-spacing: var(--tracking); }
```
